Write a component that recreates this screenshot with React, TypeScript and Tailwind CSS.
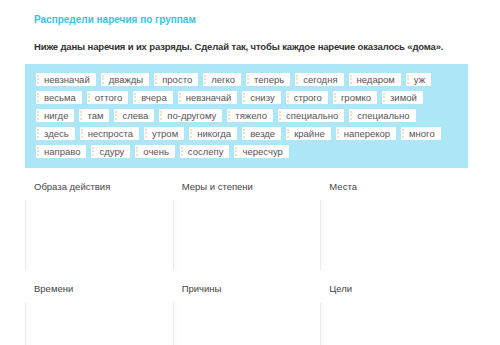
import React from 'react';

const rows: string[][] = [
  ['невзначай', 'дважды', 'просто', 'легко', 'теперь', 'сегодня', 'недаром', 'уж'],
  ['весьма', 'оттого', 'вчера', 'невзначай', 'снизу', 'строго', 'громко', 'зимой'],
  ['нигде', 'там', 'слева', 'по-другому', 'тяжело', 'специально', 'специально'],
  ['здесь', 'неспроста', 'утром', 'никогда', 'везде', 'крайне', 'наперекор', 'много'],
  ['направо', 'сдуру', 'очень', 'сослепу', 'чересчур'],
];

const groups = ['Образа действия', 'Меры и степени', 'Места', 'Времени', 'Причины', 'Цели'];

const Chip: React.FC<{ word: string }> = ({ word }) => (
  <div className="flex items-center h-[13px] bg-white rounded-[1px] pl-[1px] pr-[6px]">
    {/* drag handle */}
    <span className="w-[2px] h-[9px] border-l-2 border-dotted border-[#ebe3c0] mr-[5px]" />
    <span className="text-[9.5px] leading-none text-[#555]">{word}</span>
  </div>
);

export default function App() {
  return (
    <div className="w-[500px] h-[345px] bg-white overflow-hidden font-['Liberation_Sans',Arial,sans-serif]">
      <div className="pl-[34px] pt-[14px]">
        <h1 className="text-[10px] font-semibold text-[#3cc2e2] leading-[12px]">Распредели наречия по группам</h1>
        <p className="mt-[15px] text-[9.5px] font-bold text-[#333] leading-[12px] tracking-[-0.15px]">
          Ниже даны наречия и их разряды. Сделай так, чтобы каждое наречие оказалось «дома».
        </p>
      </div>

      <div className="ml-[25px] mt-[11px] w-[443px] h-[104px] bg-[#ade6f7] pt-[9px] pl-[11px] flex flex-col gap-[5px]">
        {rows.map((row, i) => (
          <div key={i} className="flex gap-[5px]">
            {row.map((w, j) => (
              <Chip key={j} word={w} />
            ))}
          </div>
        ))}
      </div>

      <div className="ml-[25px] w-[443px] grid grid-cols-3">
        {groups.map((g) => (
          <div key={g} className="pt-[13px]">
            <div className="pl-[9px] text-[9.5px] text-[#444] leading-[12px]">{g}</div>
            <div className="mt-[7px] h-[70px] border-l border-[#ececec] shadow-[inset_6px_0_6px_-6px_rgba(0,0,0,0.04)]" />
          </div>
        ))}
      </div>
    </div>
  );
}
